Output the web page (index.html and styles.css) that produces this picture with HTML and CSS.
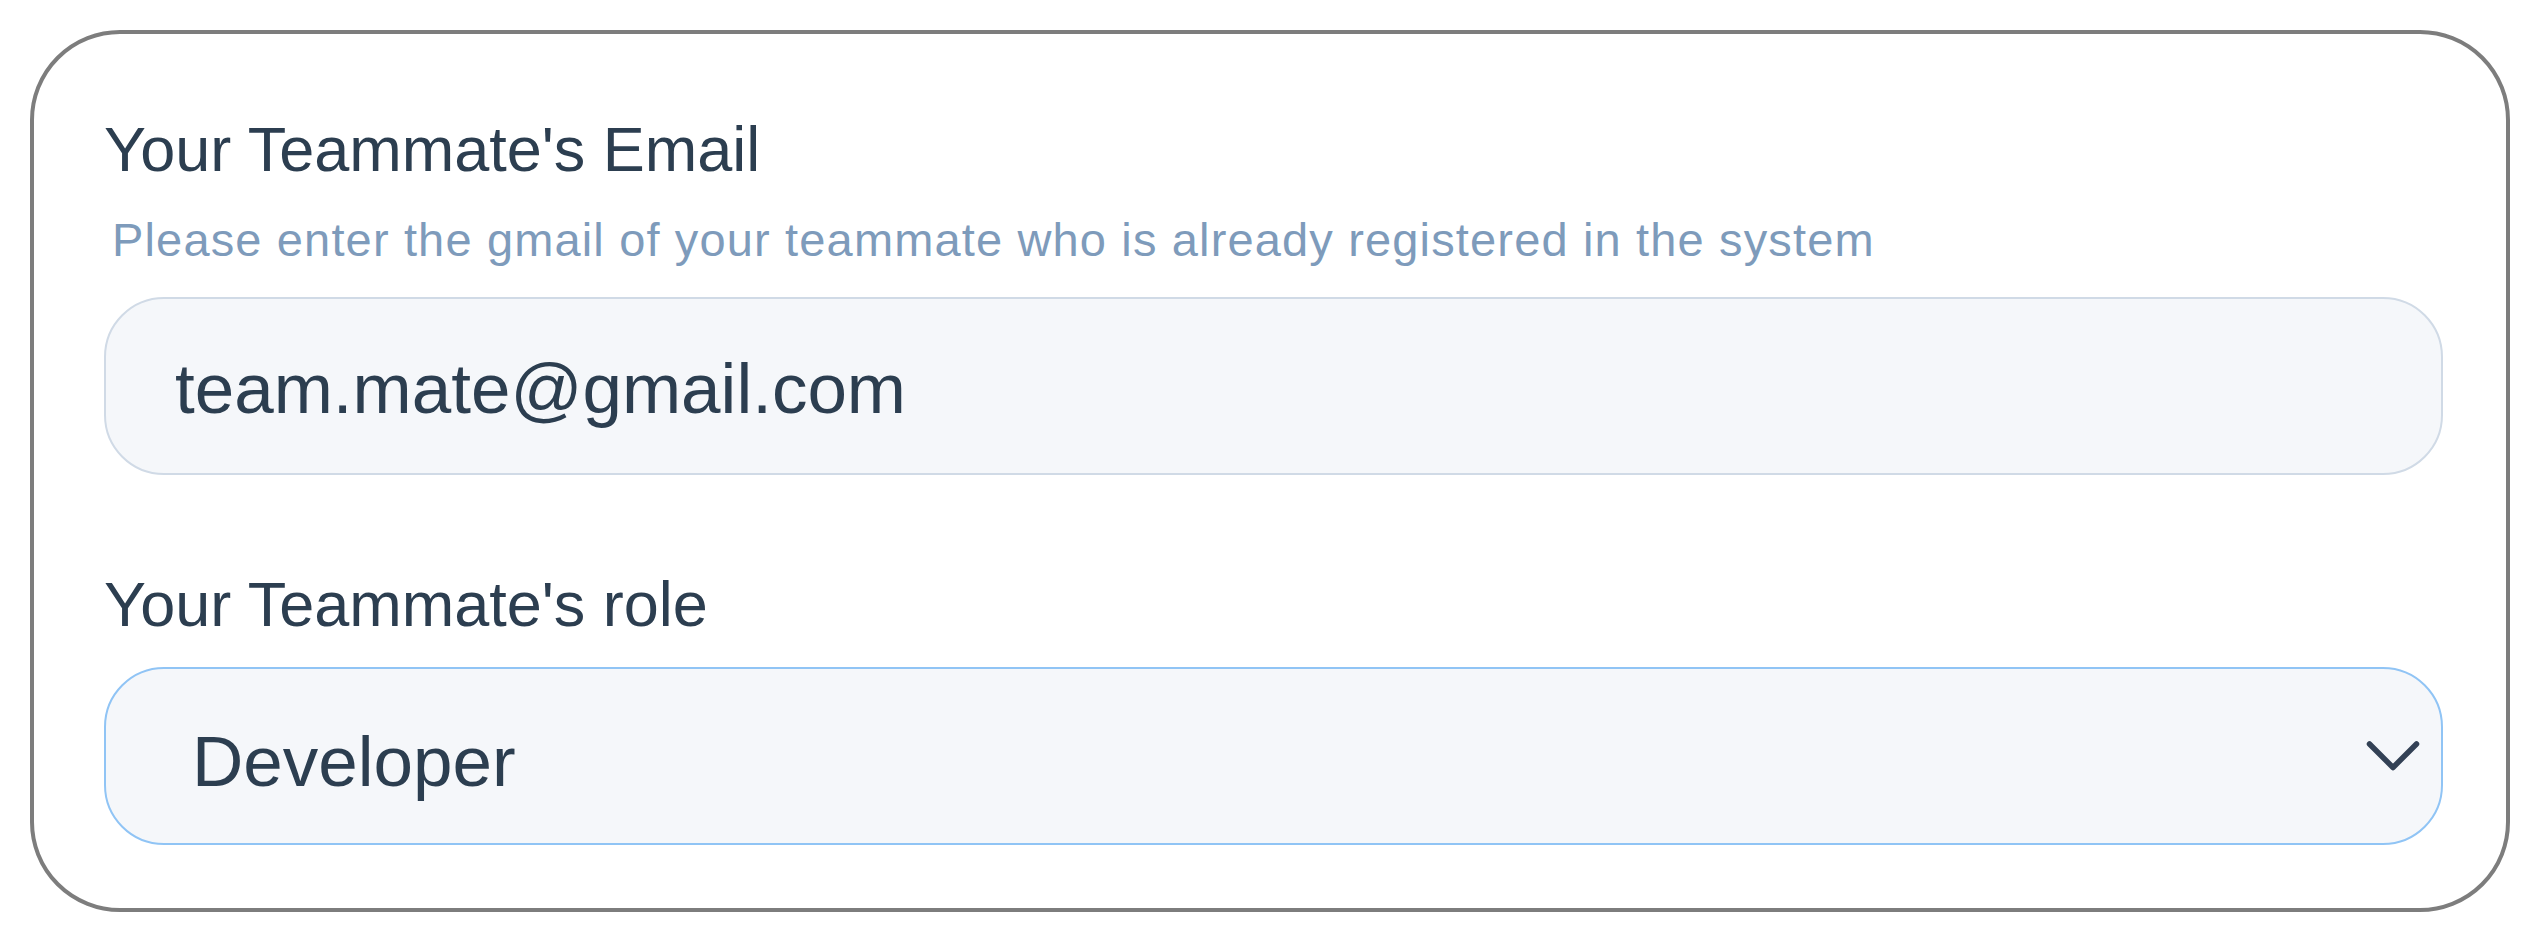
FILE: index.html
```html
<!DOCTYPE html>
<html lang="en">
<head>
<meta charset="utf-8">
<title>Invite teammate</title>
<link rel="stylesheet" href="styles.css">
</head>
<body>
  <div class="frame">
    <form class="form">
      <label class="label" for="email">Your Teammate's Email</label>
      <p class="hint">Please enter the gmail of your teammate who is already registered in the system</p>
      <input class="field" id="email" type="email" value="team.mate@gmail.com">
      <label class="label label-role">Your Teammate's role</label>
      <div class="select" role="combobox" aria-expanded="false">
        <span class="select-value">Developer</span>
        <svg class="chevron" width="56" height="34" viewBox="0 0 56 34" aria-hidden="true">
          <path d="M4.5 5 L28 28.5 L51.5 5" fill="none" stroke="#334155" stroke-width="5.5" stroke-linecap="round" stroke-linejoin="round"/>
        </svg>
      </div>
    </form>
  </div>
</body>
</html>
```

FILE: styles.css
```css
html, body {
  margin: 0;
  padding: 0;
  background: #ffffff;
}

body {
  font-family: "Liberation Sans", Arial, Helvetica, sans-serif;
  color: #2d3e50;
}

.frame {
  box-sizing: border-box;
  width: 2480px;
  height: 882px;
  margin: 30px 0 0 30px;
  border: 4px solid #7d7d7d;
  border-radius: 90px;
  background: #ffffff;
  padding: 80px 63px 0 70px;
}

.form {
  display: flex;
  flex-direction: column;
}

.label {
  display: block;
  font-size: 63px;
  line-height: 70px;
  color: #2c3e50;
  margin: 0;
}

.hint {
  margin: 30px 0 0 0;
  padding-left: 8px;
  font-size: 47px;
  line-height: 52px;
  letter-spacing: 1.15px;
  color: #7e9bbb;
}

.field {
  box-sizing: border-box;
  display: block;
  width: 100%;
  height: 178px;
  margin: 31px 0 0 0;
  padding: 4px 0 0 69px;
  border: 2px solid #d0dae6;
  border-radius: 60px;
  background: #f5f7fa;
  font-family: "Liberation Sans", Arial, Helvetica, sans-serif;
  font-size: 71px;
  color: #2c3e50;
  outline: none;
}

.label-role {
  margin-top: 94px;
}

.select {
  box-sizing: border-box;
  display: flex;
  align-items: center;
  justify-content: space-between;
  height: 178px;
  margin-top: 28px;
  padding: 0 20px 0 86px;
  border: 2px solid #90c4f5;
  border-radius: 60px;
  background: #f5f7fa;
}

.select-value {
  margin-top: 12px;
  font-size: 71px;
  line-height: 80px;
  color: #2c3e50;
}

.chevron {
  display: block;
  flex: none;
}
```
